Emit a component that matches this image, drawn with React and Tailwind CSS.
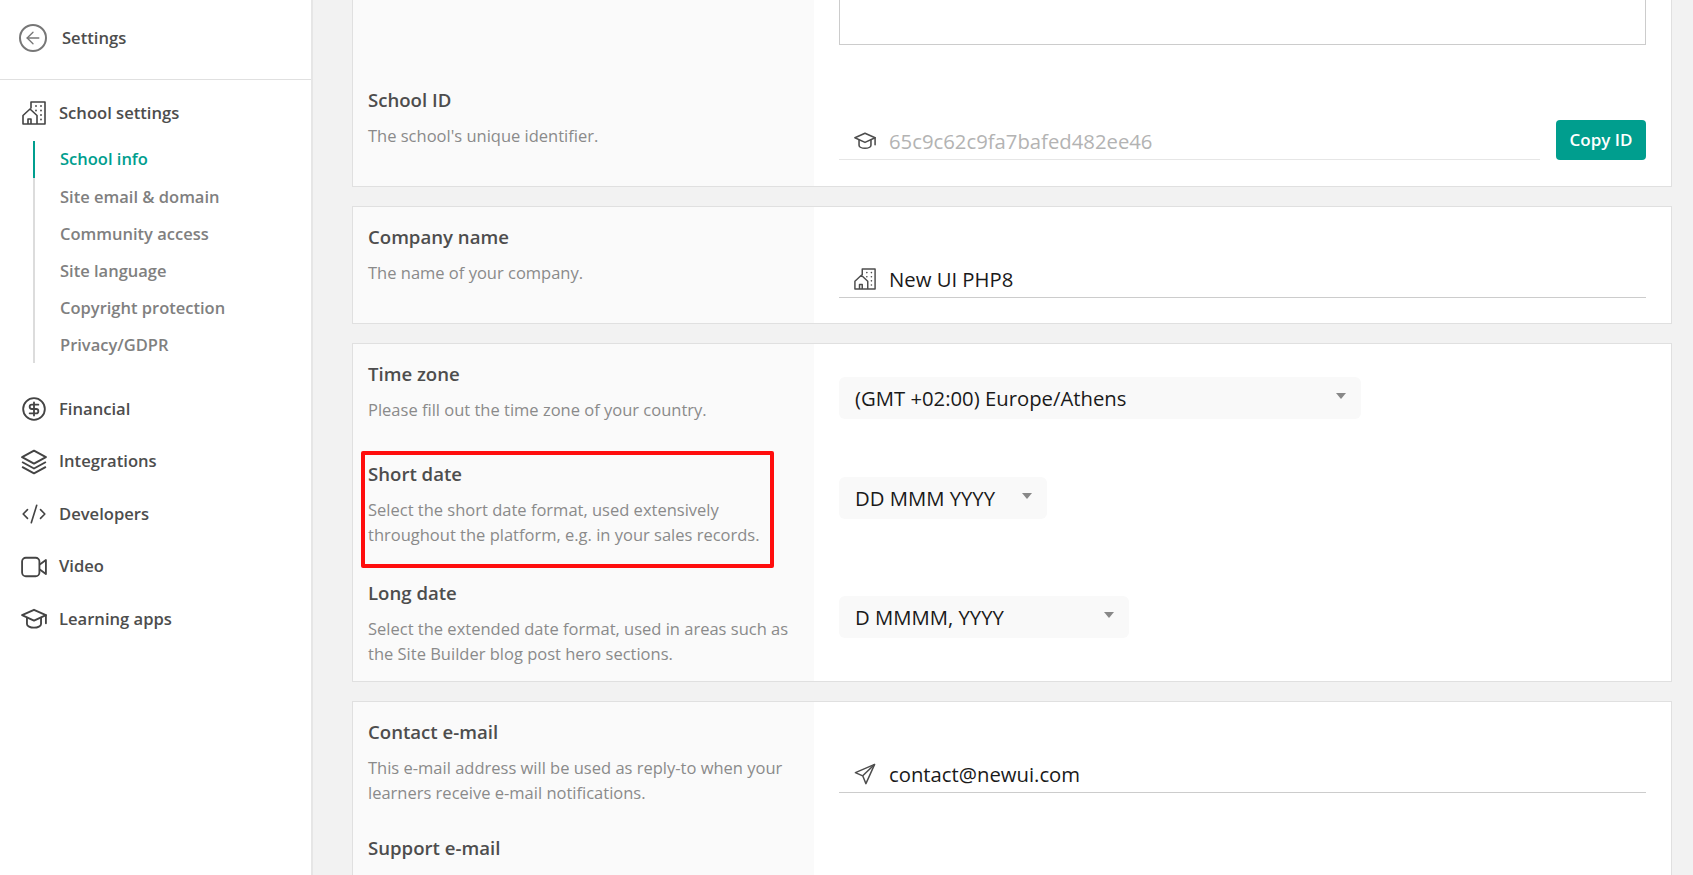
import { ArrowLeft, CircleDollarSign, CodeXml } from "lucide-react";

const FONT = "font-['Open_Sans','Noto_Sans',sans-serif]";

const subItems = [
  "Site email & domain",
  "Community access",
  "Site language",
  "Copyright protection",
  "Privacy/GDPR",
];

const BuildingIcon = ({ className }) => (
  <svg viewBox="0 0 24 24" fill="none" stroke="currentColor" strokeWidth="1.6" strokeLinejoin="round" className={className}>
    <path d="M9 7.500V1h14v22H1v-8.500L8 8l7 6.500V23" />
    <path d="M6 23v-5h3v5" />
    <path d="M14 5h.01M19 5h.01M19 9.500h.01M14 9.500h.01M19 14h.01M19 18.500h.01" strokeWidth="1.8" strokeLinecap="round" />
  </svg>
);

const LayersIcon = ({ className }) => (
  <svg viewBox="0 0 24 24" fill="none" stroke="currentColor" strokeWidth="1.8" strokeLinejoin="round" className={className}>
    <path d="M12 1.500 23 7.500 12 13.500 1 7.500z" />
    <path d="M1 12 12 18 23 12" />
    <path d="M1 16.500 12 22.500 23 16.500" />
  </svg>
);

const VideoIcon = ({ className }) => (
  <svg viewBox="0 0 24 24" fill="none" stroke="currentColor" strokeWidth="1.7" strokeLinejoin="round" className={className}>
    <rect x="1" y="3.500" width="16" height="17" rx="3.500" />
    <path d="M17 10 23 5.500v13L17 14" />
  </svg>
);

const CapIcon = ({ className }) => (
  <svg viewBox="0 0 24 24" fill="none" stroke="currentColor" strokeWidth="1.7" strokeLinejoin="round" strokeLinecap="round" className={className}>
    <path d="M12 3.500 1 8.500 12 13.500 23 8.500z" />
    <path d="M5.500 11v5.500c0 2 3 3.500 6.500 3.500s6.500-1.500 6.500-3.500V11" />
    <path d="M23 8.500V16" />
  </svg>
);

const PlaneIcon = ({ className }) => (
  <svg viewBox="0 0 24 24" fill="none" stroke="currentColor" strokeWidth="1.6" strokeLinejoin="round" className={className}>
    <path d="M22.500 1.500 1.500 10.500 9.500 14 13 22.500z" />
    <path d="M22.500 1.500 9.500 14" />
  </svg>
);

const DollarIcon = ({ className }) => <CircleDollarSign className={className} strokeWidth={1.7} />;
const CodeIcon = ({ className }) => <CodeXml className={className} strokeWidth={1.5} />;

const NavItem = ({ icon: Icon, label }) => (
  <div className="flex items-center h-[52.5px] pl-[21px]">
    <Icon className="w-[26px] h-[26px] text-[#444] shrink-0" />
    <span className="ml-[12px] text-[16.6px] font-semibold text-[#4d4d4d]">{label}</span>
  </div>
);

const Sidebar = () => (
  <aside className="w-[313px] shrink-0 bg-white border-r-2 border-[#e6e6e6] h-full">
    <div className="h-[80px] border-b border-[#e0e0e0] flex items-center pl-[19px] pb-[4px]">
      <div className="w-[28px] h-[28px] rounded-full border-2 border-[#777] flex items-center justify-center shrink-0">
        <ArrowLeft className="w-[20px] h-[20px] text-[#777]" strokeWidth={1.6} />
      </div>
      <span className="ml-[15px] mt-[1px] text-[16.6px] font-semibold text-[#4d4d4d]">Settings</span>
    </div>
    <div className="flex items-center pl-[22px] mt-[20px] h-[26px]">
      <BuildingIcon className="w-[24px] h-[24px] text-[#444]" />
      <span className="ml-[13px] text-[16.6px] font-semibold text-[#4d4d4d]">School settings</span>
    </div>
    <div className="ml-[33px] mt-[15px] border-l-2 border-[#dcdcdc] h-[222px]">
      <div className="-ml-[2px] border-l-2 border-[#009e8e] h-[37px] pl-[25px] flex items-center text-[16.5px] font-semibold text-[#009e8e]">
        School info
      </div>
      <div className="pt-[1px]">
        {subItems.map((item) => (
          <div key={item} className="h-[37px] pl-[25px] flex items-center text-[16.5px] font-semibold text-[#808080]">
            {item}
          </div>
        ))}
      </div>
    </div>
    <div className="mt-[20px]">
      <NavItem icon={DollarIcon} label="Financial" />
      <NavItem icon={LayersIcon} label="Integrations" />
      <NavItem icon={CodeIcon} label="Developers" />
      <NavItem icon={VideoIcon} label="Video" />
      <NavItem icon={CapIcon} label="Learning apps" />
    </div>
  </aside>
);

const Info = ({ title, lines }) => (
  <div className="w-[461px] shrink-0 bg-[#fafafa] pl-[15px] pt-[17px]">
    <div className="text-[18.6px] leading-[25px] font-semibold text-[#4d4d4d]">{title}</div>
    <div className="mt-[11px] text-[16.5px] leading-[25px] text-[#8a8a8a]">
      {lines.map((line) => (
        <div key={line}>{line}</div>
      ))}
    </div>
  </div>
);

const TextField = ({ icon: Icon, value, muted, border = "border-[#cccccc]" }) => (
  <div className={`flex-1 h-[37px] border-b ${border} flex items-center pl-[15px]`}>
    <Icon className="w-[22px] h-[22px] text-[#4d4d4d] shrink-0" />
    <span className={`ml-[13px] text-[20.3px] ${muted ? "text-[#b3b3b3]" : "text-[#1a1a1a]"}`}>{value}</span>
  </div>
);

const SelectBox = ({ value, width }) => (
  <div className={`${width} h-[42px] rounded-[6px] bg-[#f9f9f9] flex items-center justify-between pl-[16px] pr-[15px]`}>
    <span className="text-[20.3px] text-[#1a1a1a]">{value}</span>
    <span className="w-0 h-0 border-l-[5px] border-r-[5px] border-t-[6px] border-l-transparent border-r-transparent border-t-[#888] -mt-[4px]" />
  </div>
);

const Row = ({ height, title, lines, children }) => (
  <div className={`flex ${height}`}>
    <Info title={title} lines={lines} />
    <div className="flex-1 pl-[25px] pr-[25px]">{children}</div>
  </div>
);

export default function App() {
  return (
    <div className={`${FONT} flex h-screen overflow-hidden bg-[#f2f2f2]`}>
      <Sidebar />
      <main className="flex-1 pl-[39px] pr-[21px] overflow-hidden">
        {/* School ID */}
        <section className="bg-white border-x border-b border-[#e0e0e0] h-[187px] flex">
          <div className="w-[461px] shrink-0 bg-[#fafafa] pl-[15px] pt-[87px]">
            <div className="text-[18.6px] leading-[25px] font-semibold text-[#4d4d4d]">School ID</div>
            <div className="mt-[11px] text-[16.5px] leading-[25px] text-[#8a8a8a]">The school's unique identifier.</div>
          </div>
          <div className="flex-1 px-[25px]">
            <div className="h-[45px] border-x border-b border-[#cccccc]" />
            <div className="flex items-end mt-[75px] h-[40px]">
              <TextField icon={CapIcon} value="65c9c62c9fa7bafed482ee46" muted border="border-[#e6e6e6]" />
              <button className="ml-[16px] w-[90px] h-[40px] rounded-[4px] bg-[#009e8e] text-white text-[17px] font-semibold">
                Copy ID
              </button>
            </div>
          </div>
        </section>

        {/* Company */}
        <section className="mt-[19px] bg-white border border-[#e0e0e0]">
          <Row height="h-[116px]" title="Company name" lines={["The name of your company."]}>
            <div className="flex pt-[54px]">
              <TextField icon={BuildingIcon} value="New UI PHP8" />
            </div>
          </Row>
        </section>

        {/* Dates */}
        <section className="mt-[19px] bg-white border border-[#e0e0e0]">
          <Row height="h-[100px]" title="Time zone" lines={["Please fill out the time zone of your country."]}>
            <div className="pt-[33px]">
              <SelectBox value="(GMT +02:00) Europe/Athens" width="w-[522px]" />
            </div>
          </Row>
          <Row
            height="h-[119px]"
            title="Short date"
            lines={["Select the short date format, used extensively", "throughout the platform, e.g. in your sales records."]}
          >
            <div className="pt-[33px]">
              <SelectBox value="DD MMM YYYY" width="w-[208px]" />
            </div>
          </Row>
          <Row
            height="h-[118px]"
            title="Long date"
            lines={["Select the extended date format, used in areas such as", "the Site Builder blog post hero sections."]}
          >
            <div className="pt-[33px]">
              <SelectBox value="D MMMM, YYYY" width="w-[290px]" />
            </div>
          </Row>
        </section>

        {/* Contact */}
        <section className="mt-[19px] bg-white border border-[#e0e0e0]">
          <Row
            height="h-[116px]"
            title="Contact e-mail"
            lines={["This e-mail address will be used as reply-to when your", "learners receive e-mail notifications."]}
          >
            <div className="flex pt-[54px]">
              <TextField icon={PlaneIcon} value="contact@newui.com" />
            </div>
          </Row>
          <Row height="h-[60px]" title="Support e-mail" lines={[]} />
        </section>
      </main>

      {/* Highlight round the short date field */}
      <div className="absolute left-[361px] top-[451px] w-[413px] h-[117px] border-[4px] border-[#ff0d0d] rounded-[2px]" />
    </div>
  );
}
